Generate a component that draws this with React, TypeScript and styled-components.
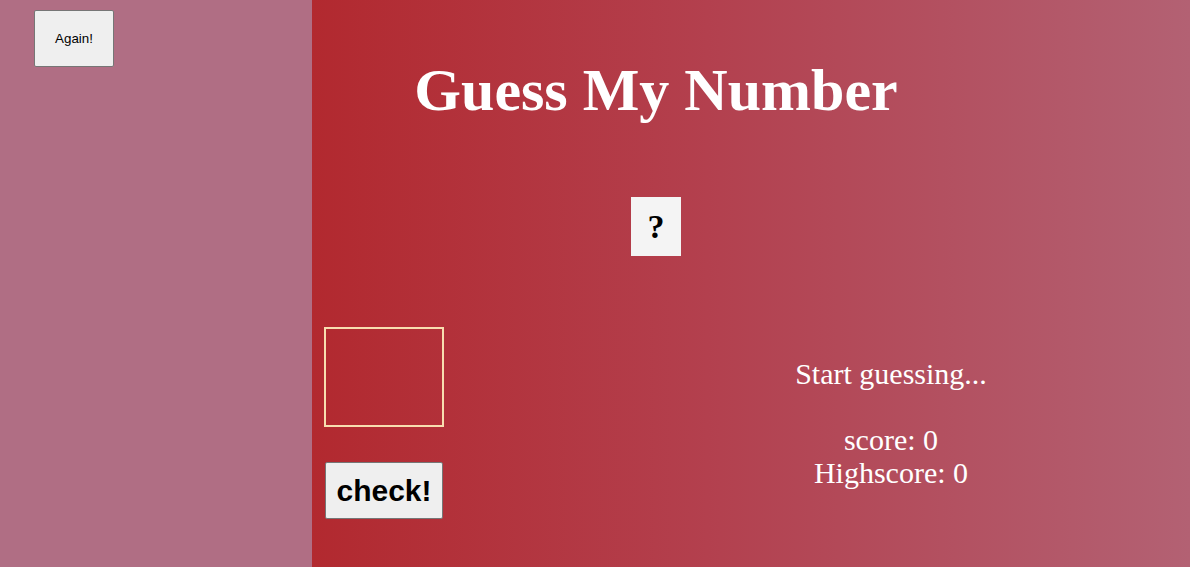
import React from "react";
import styled, { createGlobalStyle } from "styled-components";

const Global = createGlobalStyle`
  html, body { margin: 0; padding: 0; }
  body { font-family: "Liberation Serif", "Times New Roman", serif; }
`;

const Page = styled.div`
  display: flex;
  width: 100%;
  height: 100vh;
  overflow: hidden;
`;

const Aside = styled.aside`
  width: 312px;
  flex: none;
  background: #b06e84;
  padding: 10px 0 0 34px;
  box-sizing: border-box;
`;

const PlainButton = styled.button<{ $w: number; $h: number; $size: number; $bold?: boolean }>`
  width: ${(p) => p.$w}px;
  height: ${(p) => p.$h}px;
  font-family: "Liberation Sans", Arial, sans-serif;
  font-size: ${(p) => p.$size}px;
  font-weight: ${(p) => (p.$bold ? 700 : 400)};
  color: #000;
  background: #efefef;
  border: 1px solid #767676;
  border-radius: 2px;
  padding: 0;
  cursor: pointer;
`;

const Main = styled.main`
  flex: 1;
  display: flex;
  flex-direction: column;
  background: linear-gradient(to right, #b2292f 0%, #b3404e 45%, #b36173 100%);
  color: #fff;
  padding: 0 0 0 12px;
`;

const Top = styled.div`
  width: 664px;
  display: flex;
  flex-direction: column;
  align-items: center;
  padding-top: 57px;
`;

const Title = styled.h1`
  margin: 0;
  font-size: 60px;
  font-weight: 700;
  line-height: 66px;
  white-space: nowrap;
  color: #fff;
`;

const Secret = styled.div`
  margin-top: 74px;
  width: 50px;
  height: 59px;
  background: #f4f4f4;
  color: #000;
  display: flex;
  align-items: center;
  justify-content: center;
  font-size: 34px;
  font-weight: 700;
`;

const Bottom = styled.div`
  margin-top: 71px;
  display: flex;
  align-items: center;
  justify-content: space-between;
`;

const Controls = styled.div`
  display: flex;
  flex-direction: column;
  align-items: flex-start;
  gap: 35px;
`;

const GuessInput = styled.input`
  width: 120px;
  height: 100px;
  box-sizing: border-box;
  background: transparent;
  border: 2px solid #f8deb0;
  color: #fff;
  font-size: 40px;
  text-align: center;
  outline: none;
`;

const CheckButton = styled(PlainButton)`
  margin-left: 1px;
`;

const Info = styled.div`
  width: 300px;
  margin-right: 149px;
  text-align: center;
  font-size: 30px;
  line-height: 33px;
`;

const Line = styled.p<{ $gap?: boolean }>`
  margin: ${(p) => (p.$gap ? "0 0 33px" : "0")};
`;

export default function App() {
  return (
    <>
      <Global />
      <Page>
        <Aside>
          <PlainButton $w={80} $h={57} $size={13.33}>
            Again!
          </PlainButton>
        </Aside>
        <Main>
          <Top>
            <Title>Guess My Number</Title>
            <Secret>?</Secret>
          </Top>
          <Bottom>
            <Controls>
              <GuessInput type="number" />
              <CheckButton $w={118} $h={57} $size={30} $bold>
                check!
              </CheckButton>
            </Controls>
            <Info>
              <Line $gap>Start guessing...</Line>
              <Line>score: 0</Line>
              <Line>Highscore: 0</Line>
            </Info>
          </Bottom>
        </Main>
      </Page>
    </>
  );
}
